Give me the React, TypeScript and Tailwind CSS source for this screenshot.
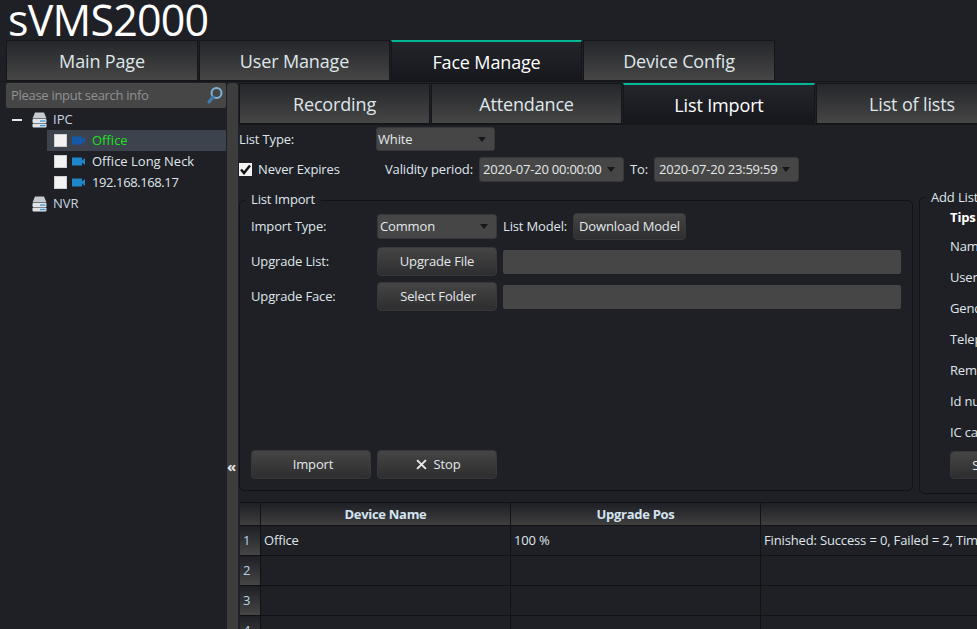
import React from "react";

const tabCls = "flex items-center justify-center border border-[#15161a] text-[#dfe6ea] shrink-0";
const off = "bg-gradient-to-b from-[#26272b] to-[#464646]";
const on = "bg-gradient-to-b from-[#24252b] to-[#17181d] border-t-2 border-t-[#00b894] text-white";

function ServerIcon() {
  return (
    <svg width="15" height="16" viewBox="0 0 15 16" className="shrink-0">
      <path d="M3 0.5h9l2.5 6H0.5z" fill="#c6cbd0" />
      <rect x="0.5" y="7" width="14" height="4" rx="1" fill="#e2e5e8" />
      <rect x="0.5" y="11.5" width="14" height="4" rx="1" fill="#dfe3e6" />
      <rect x="8" y="8.4" width="5.5" height="1.3" fill="#3a9ad9" />
      <rect x="8" y="12.9" width="5.5" height="1.3" fill="#3a9ad9" />
    </svg>
  );
}

function CamIcon({ color }: { color: string }) {
  return (
    <svg width="13" height="9" viewBox="0 0 13 9" className="shrink-0 block">
      <rect x="0" y="0.5" width="10" height="8" fill={color} />
      <path d="M10 3.5L13 1v7l-3-2.5z" fill={color} />
    </svg>
  );
}

function Check() {
  return <span className="w-[13px] h-[13px] bg-[#f2f2f2] border border-[#cfcfcf] shrink-0 block" />;
}

function Arrow() {
  return <span className="w-0 h-0 border-x-[4px] border-x-transparent border-t-[5px] border-t-[#16171a] shrink-0" />;
}

function TreeDev({ label, active, tight }: { label: string; active?: boolean; tight?: boolean }) {
  return (
    <div className={"h-[21px] ml-[41px] pl-[7px] flex items-center " + (active ? "bg-[#3c434c]" : "")}>
      <Check />
      <span className="ml-[5px]"><CamIcon color={active ? "#1458a8" : "#1f87c9"} /></span>
      <span className={"ml-[7px] " + (active ? "text-[#1fe01f] " : "text-[#dfe6ea] ") + (tight ? "tracking-[-0.4px]" : "")}>{label}</span>
    </div>
  );
}

function TreeRoot({ label, minus }: { label: string; minus?: boolean }) {
  return (
    <div className="h-[21px] flex items-center">
      <span className="w-[10px] ml-[6px] h-[2px]">{minus && <span className="block h-[2px] bg-[#e6e6e6]" />}</span>
      <span className="ml-[10px]"><ServerIcon /></span>
      <span className="ml-[6px] text-[#c9d6e2]">{label}</span>
    </div>
  );
}

function Btn({ children, className }: { children: React.ReactNode; className?: string }) {
  return (
    <div className={"flex items-center justify-center rounded-[4px] border border-[#37383c] bg-gradient-to-b from-[#454545] to-[#2e2e30] text-[#e4e8ea] " + (className ?? "")}>
      {children}
    </div>
  );
}

function Select({ text, className }: { text: string; className: string }) {
  return (
    <div className={"flex items-center justify-between rounded-[3px] border border-[#37383c] bg-[#464646] pr-[8px] text-[#e4e8ea] " + className}>
      <span>{text}</span>
      <Arrow />
    </div>
  );
}

function Row({ n, first }: { n: number; first?: boolean }) {
  return (
    <div className="flex h-[30px] border-b border-[#111216]">
      <div className="w-[21px] shrink-0 flex items-center pl-[3px] border-r border-[#111216] bg-gradient-to-b from-[#1f2026] to-[#464646] text-[#b9d3e6]">{n}</div>
      <div className="w-[250px] shrink-0 flex items-center pl-[3px] border-r border-[#111216]">{first && "Office"}</div>
      <div className="w-[250px] shrink-0 flex items-center pl-[3px] border-r border-[#111216]">{first && "100 %"}</div>
      <div className="flex-1 flex items-center pl-[3px] whitespace-nowrap">{first && "Finished: Success = 0, Failed = 2, Time = 1 s"}</div>
    </div>
  );
}

export default function App() {
  return (
    <div className="w-[977px] h-[629px] overflow-hidden bg-[#1f2026] text-[13px] leading-none text-[#dfe6ea] font-['Open_Sans','Noto_Sans',sans-serif]">
      <div className="h-[40px] pl-[8px] leading-[40px] text-[43px] text-white tracking-[-0.8px]">sVMS2000</div>

      <div className="h-[42px] pl-[6px] flex gap-px text-[18px] tracking-[-0.15px] border-b border-[#15161a]">
        <div className={tabCls + " w-[192px] " + off}>Main Page</div>
        <div className={tabCls + " w-[191px] " + off}>User Manage</div>
        <div className={tabCls + " w-[191px] pt-[2px] " + on}>Face Manage</div>
        <div className={tabCls + " w-[192px] " + off}>Device Config</div>
      </div>

      <div className="flex h-[547px]">
        <div className="w-[220px] ml-[6px] shrink-0">
          <div className="h-[25px] mt-px flex items-center justify-between pl-[5px] pr-[3px] rounded-[2px] bg-[#464646] text-[#8f9194] tracking-[-0.3px]">
            <span>Please input search info</span>
            <svg width="16" height="19" viewBox="0 0 16 19">
              <circle cx="9.5" cy="7" r="5" fill="none" stroke="#7fb4d8" strokeWidth="2" />
              <path d="M6 11l-4 5" stroke="#3b7fae" strokeWidth="3" strokeLinecap="round" />
            </svg>
          </div>
          <div className="mt-px">
            <TreeRoot label="IPC" minus />
            <TreeDev label="Office" active />
            <TreeDev label="Office Long Neck" />
            <TreeDev label="192.168.168.17" tight />
            <TreeRoot label="NVR" />
          </div>
        </div>

        <div className="w-[11px] ml-px mr-px mt-px shrink-0 rounded-t-[4px] bg-[#3d3d3e] flex justify-start pt-[376px] text-[15px] font-bold text-[#e8e8e8]">
          <span>«</span>
        </div>

        <div className="flex-1 min-w-0 overflow-hidden tracking-[-0.15px]">
          <div className="mt-px h-[42px] flex gap-px text-[18px] tracking-[-0.15px] border-b border-[#15161a] w-[800px]">
            <div className={tabCls + " w-[191px] " + off}>Recording</div>
            <div className={tabCls + " w-[191px] " + off}>Attendance</div>
            <div className={tabCls + " w-[192px] pt-[2px] " + on}>List Import</div>
            <div className={tabCls + " w-[192px] " + off}>List of lists</div>
          </div>

          <div className="flex items-center h-[24px] mt-[2px]">
            <span className="w-[137px]">List Type:</span>
            <Select text="White" className="w-[119px] h-[24px] pl-px" />
          </div>

          <div className="flex items-center h-[25px] mt-[6px]">
            <span className="w-[13px] h-[13px] bg-[#f2f2f2] flex items-center justify-center">
              <svg width="13" height="13" viewBox="0 0 13 13"><path d="M2 6.5l3 3.5 6-7.5" fill="none" stroke="#111" strokeWidth="2.4" /></svg>
            </span>
            <span className="ml-[6px] w-[127px]">Never Expires</span>
            <span className="w-[94px]">Validity period:</span>
            <Select text="2020-07-20 00:00:00" className="w-[145px] h-[25px] pl-[3px] tracking-[-0.22px]" />
            <span className="ml-[6px] w-[24px]">To:</span>
            <Select text="2020-07-20 23:59:59" className="w-[145px] h-[25px] pl-[4px] tracking-[-0.22px]" />
          </div>

          <div className="flex items-start mt-[18px] h-[295px]">
            <div className="relative w-[674px] h-[291px] border border-[#111216] rounded-[5px] pl-[11px] shrink-0">
              <span className="absolute -top-[8px] left-[5px] px-[6px] bg-[#1f2026]">List Import</span>
              <div className="flex items-center h-[27px] mt-[12px]">
                <span className="w-[126px]">Import Type:</span>
                <Select text="Common" className="w-[120px] h-[25px] pl-[2px]" />
                <span className="ml-[6px] w-[70px]">List Model:</span>
                <Btn className="w-[113px] h-[27px]">Download Model</Btn>
              </div>
              <div className="flex items-center h-[29px] mt-[7px]">
                <span className="w-[126px]">Upgrade List:</span>
                <Btn className="w-[120px] h-[29px]">Upgrade File</Btn>
                <div className="w-[398px] h-[24px] ml-[6px] rounded-[2px] bg-[#464646]" />
              </div>
              <div className="flex items-center h-[29px] mt-[6px]">
                <span className="w-[126px]">Upgrade Face:</span>
                <Btn className="w-[120px] h-[29px] pl-[2px]">Select Folder</Btn>
                <div className="w-[398px] h-[24px] ml-[6px] rounded-[2px] bg-[#464646]" />
              </div>
              <div className="flex gap-[6px] mt-[139px]">
                <Btn className="w-[120px] h-[29px] pl-[4px]">Import</Btn>
                <Btn className="w-[120px] h-[29px] gap-[7px] pl-[2px]">
                  <svg width="11" height="11" viewBox="0 0 10 10"><path d="M1 1l8 8M9 1l-8 8" stroke="#e8e8e8" strokeWidth="1.8" /></svg>
                  Stop
                </Btn>
              </div>
            </div>

            <div className="relative ml-[6px] -mt-[3px] w-[120px] h-[297px] border border-[#111216] rounded-[5px] pl-[30px] shrink-0 whitespace-nowrap">
              <span className="absolute -top-[7px] left-[5px] pl-[6px] bg-[#1f2026]">Add List</span>
              <div className="mt-[13px] h-[14px] font-bold text-white">Tips</div>
              <div className="mt-[15px]">Name</div>
              <div className="mt-[18px]">User</div>
              <div className="mt-[18px]">Gender</div>
              <div className="mt-[18px]">Telephone</div>
              <div className="mt-[18px]">Remark</div>
              <div className="mt-[18px]">Id number</div>
              <div className="mt-[18px]">IC card</div>
              <Btn className="w-[72px] h-[28px] mt-[12px]">Save</Btn>
            </div>
          </div>

          <div className="mt-[7px] ml-px border-t border-[#111216]">
            <div className="flex h-[23px] border-b border-[#111216] font-bold tracking-[-0.3px] text-[#d4e4f0]">
              <div className="w-[21px] shrink-0 border-r border-[#111216] bg-gradient-to-b from-[#1f2026] to-[#3f3f40]" />
              <div className="w-[250px] shrink-0 flex items-center justify-center border-r border-[#111216] bg-gradient-to-b from-[#1f2026] to-[#3f3f40]">Device Name</div>
              <div className="w-[250px] shrink-0 flex items-center justify-center border-r border-[#111216] bg-gradient-to-b from-[#1f2026] to-[#3f3f40]">Upgrade Pos</div>
              <div className="flex-1 bg-gradient-to-b from-[#1f2026] to-[#3f3f40]" />
            </div>
            <Row n={1} first />
            <Row n={2} />
            <Row n={3} />
            <Row n={4} />
          </div>
        </div>
      </div>
    </div>
  );
}
